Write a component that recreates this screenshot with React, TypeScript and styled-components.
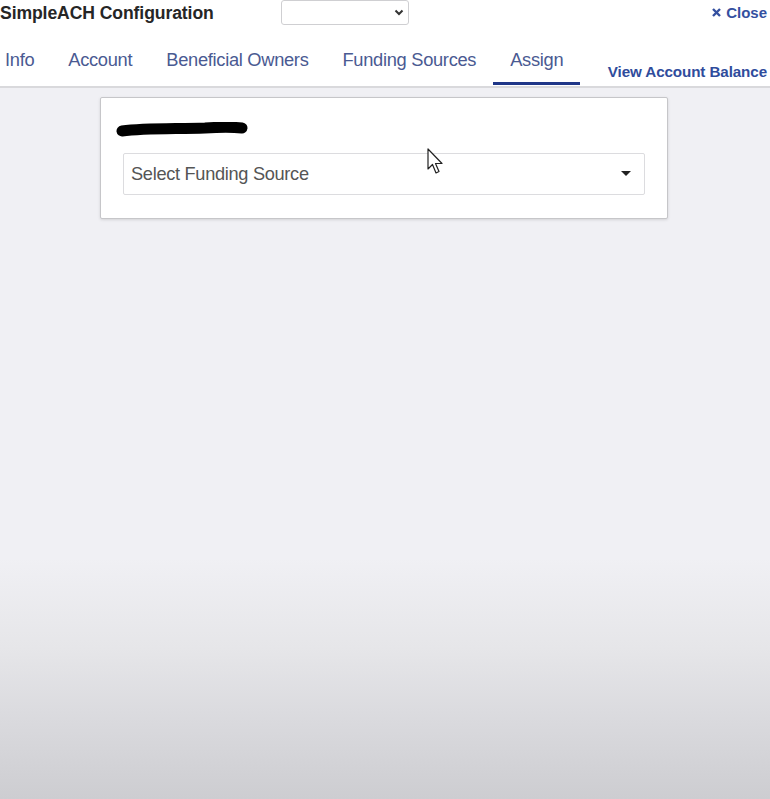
import React from 'react'
import styled, { createGlobalStyle } from 'styled-components'

const GlobalStyle = createGlobalStyle`
  html, body {
    margin: 0;
    padding: 0;
    background: #f0f0f4;
  }
  body {
    font-family: 'Liberation Sans', Arial, sans-serif;
  }
  #root {
    min-height: 100vh;
  }
`

const Page = styled.div`
  position: relative;
  display: flex;
  flex-direction: column;
  min-height: 100vh;
  width: 770px;
  overflow: hidden;
`

const Header = styled.header`
  background: #fff;
  height: 86px;
  border-bottom: 2px solid #d9d9dc;
  display: flex;
  flex-direction: column;
`

const TopRow = styled.div`
  height: 26px;
  display: flex;
  align-items: center;
`

const Title = styled.h1`
  margin: 0;
  width: 281px;
  font-size: 17.6px;
  font-weight: 700;
  color: #262626;
  letter-spacing: -0.1px;
`

const MiniSelect = styled.div`
  width: 128px;
  height: 25px;
  box-sizing: border-box;
  border: 1px solid #cfcfd2;
  border-radius: 3px;
  display: flex;
  align-items: center;
  justify-content: flex-end;
  padding-right: 4px;
  margin-top: -1px;
`

const CloseLink = styled.a`
  margin-left: auto;
  margin-right: 3px;
  display: flex;
  align-items: center;
  gap: 5px;
  color: #3450a0;
  font-size: 15px;
  font-weight: 700;
  text-decoration: none;
  margin-top: -1px;
`

const TabRow = styled.nav`
  flex: 1;
  display: flex;
  align-items: stretch;
`

const Tab = styled.div<{ $active?: boolean; $first?: boolean }>`
  display: flex;
  align-items: center;
  padding: 8px 17px 0 ${(p) => (p.$first ? '5px' : '17px')};
  font-size: 18.3px;
  color: #4a5a92;
  letter-spacing: -0.3px;
  border-bottom: 3px solid ${(p) => (p.$active ? '#1f3688' : 'transparent')};
  margin-top: 4px;
  margin-bottom: 1px;
`

const BalanceLink = styled.a`
  margin-left: auto;
  margin-right: 3px;
  align-self: flex-end;
  margin-bottom: 6px;
  color: #2f4c9c;
  font-size: 15.2px;
  font-weight: 700;
  text-decoration: none;
  letter-spacing: -0.1px;
`

const Body = styled.main`
  flex: 1;
  padding-top: 9px;
  background: linear-gradient(
    to bottom,
    #f0f0f4 0,
    #f0f0f4 470px,
    #e6e6e9 560px,
    #dadade 630px,
    #cdcdd1 711px
  );
`

const Card = styled.section`
  margin-left: 100px;
  width: 568px;
  box-sizing: border-box;
  background: #fff;
  border: 1px solid #c6c6c9;
  border-radius: 2px;
  box-shadow: 0 1px 3px rgba(0, 0, 0, 0.12);
  padding: 24px 22px 23px;
`

const Redaction = styled.svg`
  display: block;
  margin-left: -8px;
  margin-bottom: 15px;
`

const FundingSelect = styled.div`
  height: 42px;
  box-sizing: border-box;
  border: 1px solid #dcdcdf;
  border-radius: 2px;
  display: flex;
  align-items: center;
  justify-content: space-between;
  padding: 0 13px 0 7px;
  font-size: 18.2px;
  color: #555;
  letter-spacing: -0.3px;
`

const Cursor = styled.svg`
  position: absolute;
  left: 427px;
  top: 148px;
`

const tabs = ['Info', 'Account', 'Beneficial Owners', 'Funding Sources', 'Assign']

export default function App() {
  return (
    <Page>
      <GlobalStyle />
      <Header>
        <TopRow>
          <Title>SimpleACH Configuration</Title>
          <MiniSelect>
            <svg width="10" height="7" viewBox="0 0 10 7">
              <path d="M1.5 1.5 L5 5 L8.5 1.5" fill="none" stroke="#333" strokeWidth="2" />
            </svg>
          </MiniSelect>
          <CloseLink href="#">
            <svg width="9" height="9" viewBox="0 0 9 9">
              <path d="M1 1 L8 8 M8 1 L1 8" stroke="#3450a0" strokeWidth="2.4" />
            </svg>
            Close
          </CloseLink>
        </TopRow>
        <TabRow>
          {tabs.map((t, i) => (
            <Tab key={t} $first={i === 0} $active={t === 'Assign'}>
              {t}
            </Tab>
          ))}
          <BalanceLink href="#">View Account Balance</BalanceLink>
        </TabRow>
      </Header>
      <Body>
        <Card>
          <Redaction width="134" height="16" viewBox="0 0 134 16">
            <path
              d="M7 9 C30 6 60 7 90 6 C105 5 118 5 127 6"
              fill="none"
              stroke="#000"
              strokeWidth="11"
              strokeLinecap="round"
            />
          </Redaction>
          <FundingSelect>
            Select Funding Source
            <svg width="10" height="6" viewBox="0 0 10 6">
              <path d="M0 0 L10 0 L5 5 Z" fill="#222" />
            </svg>
          </FundingSelect>
        </Card>
      </Body>
      <Cursor width="18" height="27" viewBox="0 0 18 27">
        <path
          d="M1 1 L1 21 L5.5 16.5 L9 25 L12 23.5 L8.5 15.5 L15 15.5 Z"
          fill="#fff"
          stroke="#222"
          strokeWidth="1.2"
          strokeLinejoin="round"
        />
      </Cursor>
    </Page>
  )
}
